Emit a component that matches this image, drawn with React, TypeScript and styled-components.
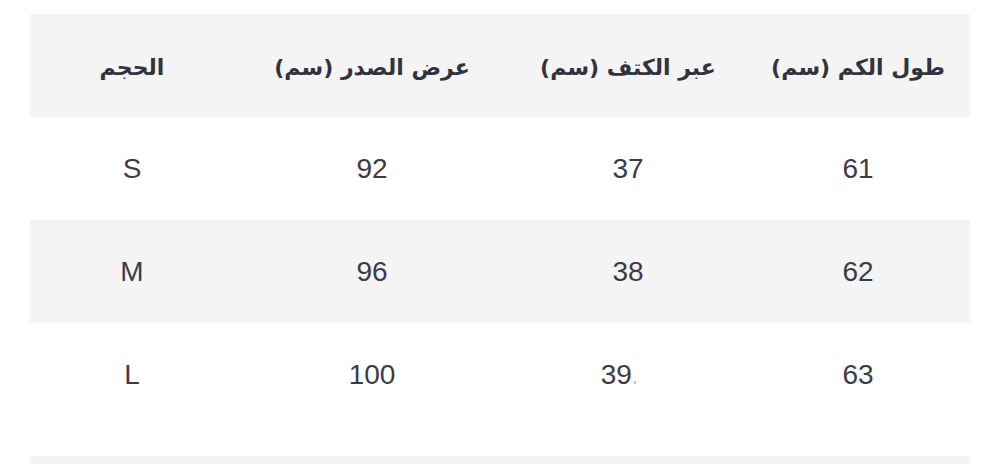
import styled, { createGlobalStyle } from "styled-components";

const GlobalStyle = createGlobalStyle`
  html, body {
    margin: 0;
    padding: 0;
    background: #ffffff;
  }
`;

const COLUMNS = "224px 236px 276px 204px";

const headers = ["طول الكم (سم)", "عبر الكتف (سم)", "عرض الصدر (سم)", "الحجم"];

const rows = [
  ["61", "37", "92", "S"],
  ["62", "38", "96", "M"],
  ["63", "39.5", "100", "L"],
];

const App = () => {
  return (
    <>
      <GlobalStyle />
      <Page>
        <Table dir="rtl">
          <Row $shaded>
            {headers.map((h) => (
              <HeadCell key={h}>{h}</HeadCell>
            ))}
          </Row>
          {rows.map((row, i) => (
            <Row key={row[3]} $shaded={i % 2 === 1}>
              {row.map((value, j) => (
                <Cell key={j}>
                  {value === "39.5" ? <Clipped>{value}</Clipped> : value}
                </Cell>
              ))}
            </Row>
          ))}
        </Table>
        <NextBlock />
      </Page>
    </>
  );
};

export default App;

const Page = styled.div`
  display: flex;
  flex-direction: column;
  gap: 30px;
  padding: 14px 30px 0;
  height: 464px;
  box-sizing: border-box;
  overflow: hidden;
`;

const Table = styled.div`
  display: flex;
  flex-direction: column;
  width: 940px;
`;

const Row = styled.div<{ $shaded?: boolean }>`
  display: grid;
  grid-template-columns: ${COLUMNS};
  height: 103px;
  align-items: center;
  background: ${({ $shaded }) => ($shaded ? "#f4f4f4" : "#ffffff")};
`;

const HeadCell = styled.div`
  text-align: center;
  font-family: "DejaVu Sans", "Noto Sans", sans-serif;
  font-weight: bold;
  font-size: 22px;
  color: #33333d;
  padding-top: 4px;
`;

const Cell = styled.div`
  text-align: center;
  font-family: "Liberation Sans", Arial, sans-serif;
  font-size: 28px;
  color: #3c3c47;
`;

const Clipped = styled.span`
  display: inline-block;
  clip-path: inset(0 20px 0 0);
`;

const NextBlock = styled.div`
  width: 940px;
  height: 40px;
  flex-shrink: 0;
  background: #f4f4f4;
`;
